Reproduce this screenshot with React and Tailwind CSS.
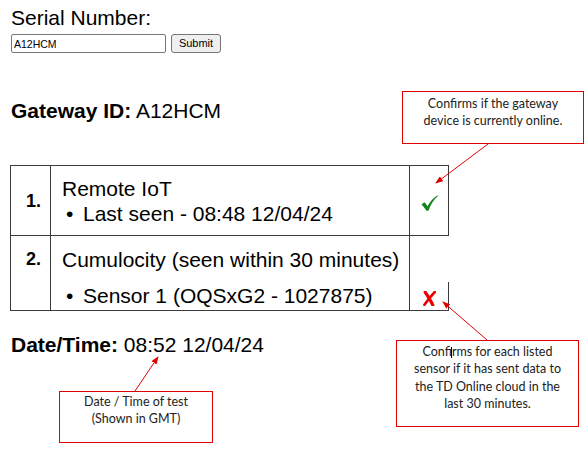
import React from 'react';

const arial = { fontFamily: '"Liberation Sans", Arial, sans-serif' };

const Callout = ({ className, lines }) => (
  <div
    className={`absolute border border-[#e00000] bg-white text-center text-[12.5px] leading-[17.3px] text-[#222] font-['Lato',sans-serif] ${className}`}
  >
    {lines.map((l, i) => (
      <div key={i}>{l}</div>
    ))}
  </div>
);

const Tick = () => (
  <svg width="17" height="16" viewBox="0 0 17 16">
    <path d="M0.5,9.2 L3.6,7.2 L6.6,11.2 C9,6.5 12.2,2.8 16.6,0.2 L16.8,1.2 C12.6,4.6 9.6,9.6 7.4,15.8 L5.6,15.8 Z" fill="#13841a" />
  </svg>
);

const Cross = () => (
  <svg width="13" height="15" viewBox="0 0 13 15">
    <path d="M2.2,1.2 C5,5 7.5,9.5 9.8,14" stroke="#ee0000" strokeWidth="3.2" strokeLinecap="round" fill="none" />
    <path d="M11.8,1 C8,5 4.5,9.5 1.4,13.8" stroke="#ee0000" strokeWidth="2.6" strokeLinecap="round" fill="none" />
  </svg>
);

export default function App() {
  return (
    <div className="relative w-[588px] h-[450px] overflow-hidden bg-white text-black" style={arial}>
      <div className="pl-[11px] pt-[6px] font-['Liberation_Sans',Arial,sans-serif]">
        {/* Serial form */}
        <div className="text-[21px] leading-[24px]">Serial Number:</div>
        <div className="mt-[4px] flex items-center">
          <input
            defaultValue="A12HCM"
            className="w-[155px] h-[19px] border border-[#767676] rounded-[2px] px-[2px] text-[10.5px] text-black outline-none"
          />
          <button className="ml-[5px] w-[50px] h-[19px] border border-[#767676] bg-[#efefef] rounded-[3px] text-[11px] leading-none">
            Submit
          </button>
        </div>

        {/* Gateway */}
        <div className="mt-[46px] text-[21px] leading-[24px]">
          <span className="font-bold">Gateway ID:</span> A12HCM
        </div>

        {/* Status table */}
        <div className="mt-[42px] -ml-[1px] w-[439px] border-l border-t border-b border-[#3a3a3a] text-[21px] leading-[25px]">
          <div className="flex h-[70px] border-b border-[#3a3a3a]">
            <div className="w-[40px] border-r border-[#3a3a3a] flex items-center pl-[15px] pt-[2px] font-bold text-[18px]">1.</div>
            <div className="w-[359px] border-r border-[#3a3a3a] pl-[11px] pt-[10px]">
              <div>Remote IoT</div>
              <div className="flex">
                <span className="w-[21px] pl-[4px]">•</span>
                <span>Last seen - 08:48 12/04/24</span>
              </div>
            </div>
            <div className="w-[39px] border-r border-[#3a3a3a] flex justify-center items-center pt-[4px]">
              <Tick />
            </div>
          </div>
          <div className="flex h-[74px]">
            <div className="w-[40px] border-r border-[#3a3a3a] pl-[15px] pt-[13px] font-bold text-[18px] leading-[20px]">2.</div>
            <div className="w-[359px] border-r border-[#3a3a3a] pl-[11px] pt-[11px]">
              <div>Cumulocity (seen within 30 minutes)</div>
              <div className="mt-[11px] flex">
                <span className="w-[21px] pl-[4px]">•</span>
                <span>Sensor 1 (OQSxG2 - 1027875)</span>
              </div>
            </div>
            <div className="w-[39px] flex flex-col justify-end">
              <div className="h-[28px] border-r border-[#3a3a3a] flex justify-center items-center pt-[5px]">
                <Cross />
              </div>
            </div>
          </div>
        </div>

        {/* Date / time */}
        <div className="mt-[22px] text-[21px] leading-[24px]">
          <span className="font-bold">Date/Time:</span> 08:52 12/04/24
        </div>
      </div>

      {/* Annotations */}
      <Callout
        className="left-[402px] top-[91px] w-[182px] h-[53px] pt-[3px]"
        lines={['Confirms if the gateway', 'device is currently online.']}
      />
      <Callout
        className="left-[396px] top-[340px] w-[183px] h-[87px] pt-[2px]"
        lines={['Confirms for each listed', 'sensor if it has sent data to', 'the TD Online cloud in the', 'last 30 minutes.']}
      />
      <Callout
        className="left-[59px] top-[391px] w-[154px] h-[52px] pt-[1px]"
        lines={['Date / Time of test', '(Shown in GMT)']}
      />
      <div className="absolute left-[451px] top-[347px] w-px h-[11px] bg-black" />

      <svg className="absolute inset-0 pointer-events-none" width="588" height="450">
        <defs>
          <marker id="ah" markerWidth="8" markerHeight="6" refX="7" refY="3" orient="auto" markerUnits="userSpaceOnUse">
            <path d="M0,0 L8,3 L0,6 Z" fill="#e00000" />
          </marker>
        </defs>
        <line x1="488" y1="144" x2="436" y2="183" stroke="#e00000" strokeWidth="1" markerEnd="url(#ah)" />
        <line x1="487" y1="340" x2="443" y2="302" stroke="#e00000" strokeWidth="1" markerEnd="url(#ah)" />
        <line x1="135" y1="391" x2="158" y2="357" stroke="#e00000" strokeWidth="1" markerEnd="url(#ah)" />
      </svg>
    </div>
  );
}
